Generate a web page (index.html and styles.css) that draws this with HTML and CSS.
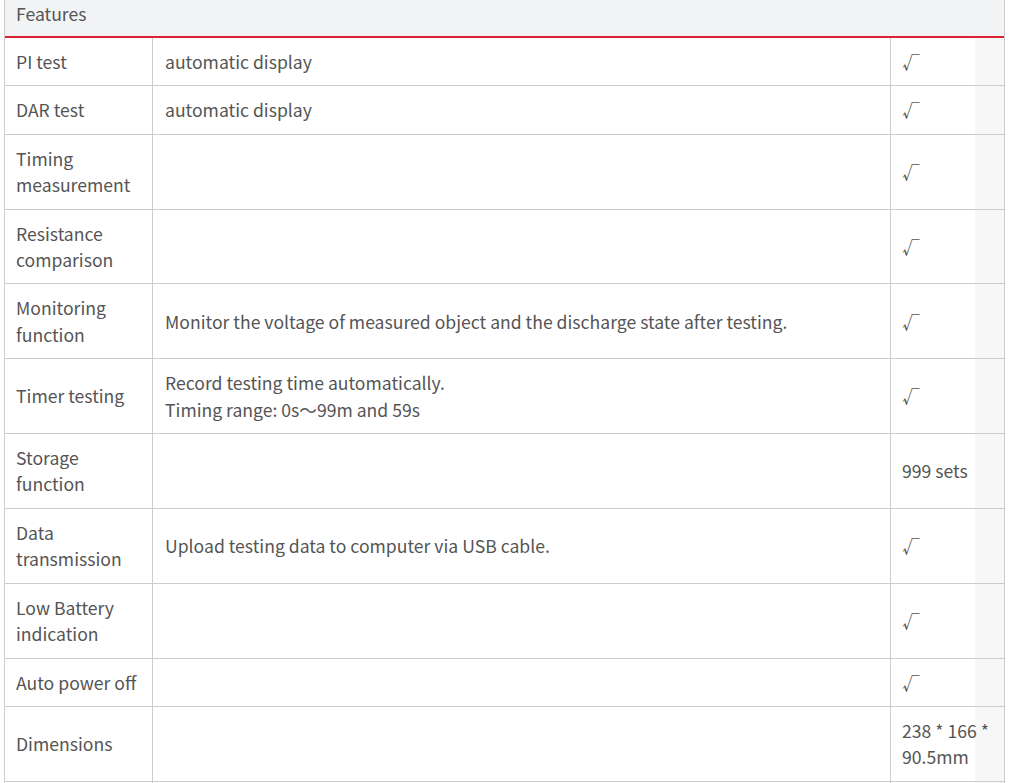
FILE: index.html
```html
<!DOCTYPE html>
<html>
<head>
<meta charset="utf-8">
<link rel="stylesheet" href="styles.css">
</head>
<body>
<div class="spec">
  <div class="spec-head">Features</div>
  <div class="row"><div class="c1">PI test</div><div class="c2">automatic display</div><div class="c3">√</div></div>
  <div class="row"><div class="c1">DAR test</div><div class="c2">automatic display</div><div class="c3">√</div></div>
  <div class="row"><div class="c1">Timing measurement</div><div class="c2"></div><div class="c3">√</div></div>
  <div class="row"><div class="c1">Resistance comparison</div><div class="c2"></div><div class="c3">√</div></div>
  <div class="row"><div class="c1">Monitoring function</div><div class="c2">Monitor the voltage of measured object and the discharge state after testing.</div><div class="c3">√</div></div>
  <div class="row"><div class="c1">Timer testing</div><div class="c2"><span class="line">Record testing time automatically.</span><span class="line">Timing range: 0s～99m and 59s</span></div><div class="c3">√</div></div>
  <div class="row"><div class="c1">Storage function</div><div class="c2"></div><div class="c3">999 sets</div></div>
  <div class="row"><div class="c1">Data transmission</div><div class="c2">Upload testing data to computer via USB cable.</div><div class="c3">√</div></div>
  <div class="row"><div class="c1">Low Battery indication</div><div class="c2"></div><div class="c3">√</div></div>
  <div class="row"><div class="c1">Auto power off</div><div class="c2"></div><div class="c3">√</div></div>
  <div class="row"><div class="c1">Dimensions</div><div class="c2"></div><div class="c3">238 * 166 * 90.5mm</div></div>
  <div class="row"><div class="c1">&nbsp;</div><div class="c2"></div><div class="c3"></div></div>
</div>
</body>
</html>
```
FILE: styles.css
```css
html, body {
  margin: 0;
  padding: 0;
  background: #fff;
}
body {
  font-family: "Noto Sans CJK SC", "Noto Sans", sans-serif;
  font-size: 17.6px;
  line-height: 26.4px;
  color: #555;
}
.spec {
  box-sizing: border-box;
  width: 1001px;
  margin-left: 4px;
  border-left: 1px solid #ccc;
  border-right: 1px solid #ccc;
}
.spec-head {
  box-sizing: border-box;
  height: 38px;
  padding: 1px 11px 0;
  background: #f2f3f5;
  border-bottom: 2px solid #d9232e;
}
.row {
  display: grid;
  grid-template-columns: 148px 738px 1fr;
  border-bottom: 1px solid #ccc;
}
.row > div {
  display: flex;
  flex-direction: column;
  justify-content: center;
  padding: 11px 11px 10px;
  box-sizing: border-box;
  min-width: 0;
}
.row > .c1 {
  border-right: 1px solid #ccc;
}
.row > .c2 {
  border-right: 1px solid #ccc;
  padding-left: 12px;
}
.row > .c3 {
  padding-right: 12px;
  background: linear-gradient(to right, #fff 84px, #f7f7f7 84px);
}
.line {
  display: block;
}
```
